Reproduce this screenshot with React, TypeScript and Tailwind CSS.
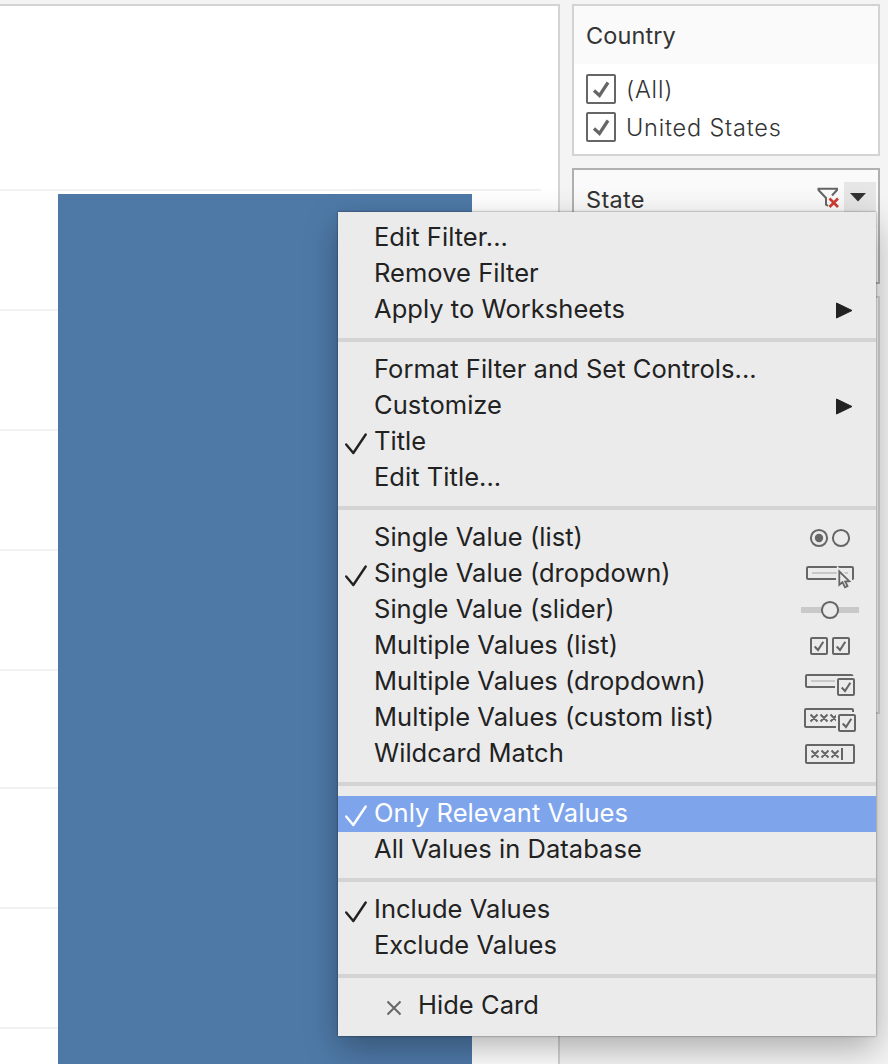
import type { ReactNode } from "react";

type Item = { label: string; checked?: boolean; icon?: ReactNode; active?: boolean; close?: boolean };

const G = "#666666";

const Arrow = () => (
  <svg width="62" height="36" viewBox="0 0 62 36">
    <path d="M38.500 11L54 18.500L38.500 26Z" fill="#222" stroke="#222" strokeWidth="1" strokeLinejoin="round" />
  </svg>
);

const Radios = () => (
  <svg width="62" height="36" viewBox="0 0 62 36" fill="none" stroke={G} strokeWidth="2">
    <circle cx="21" cy="18" r="8.100" />
    <circle cx="21" cy="18" r="4.200" fill={G} stroke="none" />
    <circle cx="43" cy="18" r="8.100" />
  </svg>
);

const Dropdown = () => (
  <svg width="62" height="36" viewBox="0 0 62 36" fill="none" stroke={G} strokeWidth="2">
    <path d="M14 17H50" stroke="#c8c8c8" />
    <path d="M38 23H10Q9 23 9 22V12Q9 11 10 11H54Q55 11 55 12V22Q55 23 54 23" />
    <path d="M41.300 15.500V28.800L44.500 26.200L47 31.300L49.500 30.100L47.200 25.500L51.300 25.200Z" fill="#ebebeb" stroke="#ebebeb" strokeWidth="5" />
    <path d="M41.300 15.500V28.800L44.500 26.200L47 31.300L49.500 30.100L47.200 25.500L51.300 25.200Z" fill="#ebebeb" strokeWidth="1.800" />
    <path d="M54 23Q55 23 55 22V13" />
  </svg>
);

const Slider = () => (
  <svg width="62" height="36" viewBox="0 0 62 36" fill="none">
    <path d="M3 18H61" stroke="#c9c9c9" strokeWidth="6" />
    <circle cx="32" cy="18" r="8.100" fill="#ebebeb" stroke={G} strokeWidth="2" />
  </svg>
);

const Box = ({ x, y }: { x: number; y: number }) => (
  <g transform={`translate(${x} ${y})`}>
    <rect x="1" y="1" width="16" height="16" rx="1" />
    <path d="M4.700 9.500L8 13L13.300 4.800" strokeWidth="2.100" />
  </g>
);

const Boxes = () => (
  <svg width="62" height="36" viewBox="0 0 62 36" fill="none" stroke={G} strokeWidth="2">
    <Box x={12} y={9} />
    <Box x={34} y={9} />
  </svg>
);

const DropdownBox = () => (
  <svg width="62" height="36" viewBox="0 0 62 36" fill="none" stroke={G} strokeWidth="2">
    <path d="M13 17H37" stroke="#c8c8c8" />
    <path d="M37 23H9Q8 23 8 22V12Q8 11 9 11H53Q54.500 11 54.500 12" />
    <Box x={39} y={14} />
  </svg>
);

const Crosses = ({ x, y }: { x: number; y: number }) => (
  <g transform={`translate(${x} ${y})`} strokeWidth="2">
    <path d="M0 0L7 7M7 0L0 7M10 0L17 7M17 0L10 7M20 0L27 7M27 0L20 7" />
  </g>
);

const CustomList = () => (
  <svg width="62" height="36" viewBox="0 0 62 36" fill="none" stroke={G} strokeWidth="2">
    <Crosses x={12.500} y={14.500} />
    <path d="M38 12H42V26H38Z" fill="#ebebeb" stroke="none" />
    <path d="M38 27H8Q7 27 7 26V10Q7 9 8 9H54Q55 9 55 10V12" />
    <Box x={40} y={14} />
  </svg>
);

const Wildcard = () => (
  <svg width="62" height="36" viewBox="0 0 62 36" fill="none" stroke={G} strokeWidth="2">
    <rect x="8" y="9" width="48" height="18" rx="1" />
    <Crosses x={13.500} y={14.500} />
    <path d="M44 12V24" />
  </svg>
);

const groups: Item[][] = [
  [{ label: "Edit Filter..." }, { label: "Remove Filter" }, { label: "Apply to Worksheets", icon: <Arrow /> }],
  [
    { label: "Format Filter and Set Controls..." },
    { label: "Customize", icon: <Arrow /> },
    { label: "Title", checked: true },
    { label: "Edit Title..." },
  ],
  [
    { label: "Single Value (list)", icon: <Radios /> },
    { label: "Single Value (dropdown)", checked: true, icon: <Dropdown /> },
    { label: "Single Value (slider)", icon: <Slider /> },
    { label: "Multiple Values (list)", icon: <Boxes /> },
    { label: "Multiple Values (dropdown)", icon: <DropdownBox /> },
    { label: "Multiple Values (custom list)", icon: <CustomList /> },
    { label: "Wildcard Match", icon: <Wildcard /> },
  ],
  [{ label: "Only Relevant Values", checked: true, active: true }, { label: "All Values in Database" }],
  [{ label: "Include Values", checked: true }, { label: "Exclude Values" }],
  [{ label: "Hide Card", close: true }],
];

function MenuItem({ item }: { item: Item }) {
  return (
    <div className={`flex h-9 items-center pr-4 ${item.active ? "bg-[#7ea5ec] text-white" : "text-[#222]"}`}>
      <div className="h-9 w-9 shrink-0">
        {item.checked && (
          <svg width="36" height="36" viewBox="0 0 36 36" fill="none" stroke="currentColor" strokeWidth="2.400" strokeLinecap="round" strokeLinejoin="round">
            <path d="M8.200 20.500L15.300 29L27.700 10.500" />
          </svg>
        )}
      </div>
      {item.close && (
        <svg width="44" height="36" viewBox="0 0 44 36" fill="none" stroke={G} strokeWidth="2">
          <path d="M13.500 13.500L26.500 26.500M26.500 13.500L13.500 26.500" />
        </svg>
      )}
      <span className="h-9 grow leading-[34px] whitespace-nowrap">{item.label}</span>
      {item.icon}
    </div>
  );
}

function ContextMenu() {
  return (
    <div className="absolute top-[212px] left-[338px] w-[538px] bg-[#ebebeb] pt-2 pb-3 text-[25.500px] tracking-[0.040px] shadow-[0_0_2px_rgba(0,0,0,0.5),0_12px_32px_rgba(0,0,0,0.3)]">
      {groups.map((group, i) => (
        <div key={i}>
          {i > 0 && <div className="my-2.5 h-1 bg-[#d4d4d4]" />}
          {group.map((item) => (
            <MenuItem key={item.label} item={item} />
          ))}
        </div>
      ))}
    </div>
  );
}

function CheckRow({ label }: { label: string }) {
  return (
    <div className="flex h-[38px] items-center gap-[10px]">
      <svg width="30" height="30" viewBox="0 0 30 30" fill="none" stroke={G}>
        <rect x="1" y="1" width="28" height="28" rx="1" strokeWidth="2" />
        <path d="M8 16.500L13.500 21.500L22 8.500" strokeWidth="3.200" />
      </svg>
      <span className="h-[38px] leading-[40px] font-light tracking-[0.8px]">{label}</span>
    </div>
  );
}

const lines = ["h-[120px]", "h-[120px]", "h-[120px]", "h-[120px]", "h-[118px]", "h-[120px]", "h-[120px]", "h-[120px]"];

export default function App() {
  return (
    <div className="relative flex h-[1064px] w-[888px] items-start gap-3 overflow-hidden bg-[#f4f4f4] pt-1 font-['Inter','Liberation_Sans',sans-serif]">
      <div className="grid h-[1060px] w-[560px] shrink-0 overflow-hidden border-t-2 border-r-2 border-[#d3d3d3] bg-white">
        <div className="col-start-1 row-start-1 w-[541px] pt-[183px]">
          {lines.map((h, i) => (
            <div key={i} className={`${h} border-t-2 border-[#f2f2f2]`} />
          ))}
        </div>
        <div className="col-start-1 row-start-1 mt-[188px] ml-[58px] w-[414px] bg-[#4e79a7]" />
      </div>
      <div className="flex w-[308px] flex-col gap-3 text-[23.500px] tracking-[0.1px] text-[#333]">
        <div className="h-[152px] border-2 border-[#d3d3d3] bg-white">
          <div className="h-[58px] bg-[#fafafa] px-3 leading-[60px]">Country</div>
          <div className="flex flex-col px-3 pt-[6px]">
            <CheckRow label="(All)" />
            <CheckRow label="United States" />
          </div>
        </div>
        <div className="h-[116px] border-2 border-[#b0b0b0] bg-white">
          <div className="flex h-[58px] bg-[#fafafa] pr-0.5 pl-3">
            <span className="grow leading-[60px] tracking-[0.3px]">State</span>
            <svg className="mt-4" width="27" height="26" viewBox="0 0 27 26" fill="none">
              <path d="M9 19.500V12L1.500 4V2.800H20V4L15 9.500M9 18.500L11 20" stroke="#666" strokeWidth="2" />
              <path d="M12.500 12.500L21 21M21 12.500L12.500 21" stroke="#cf3a30" strokeWidth="2.600" />
            </svg>
            <div className="mt-3 flex h-[34px] w-8 justify-center bg-[#e6e6e6]">
              <svg width="32" height="34" viewBox="0 0 32 34">
                <path d="M6 11H22L14 19.500Z" fill="#333" />
              </svg>
            </div>
          </div>
        </div>
        <div className="h-[418px] border-2 border-[#d3d3d3] bg-white" />
      </div>
      <ContextMenu />
    </div>
  );
}
